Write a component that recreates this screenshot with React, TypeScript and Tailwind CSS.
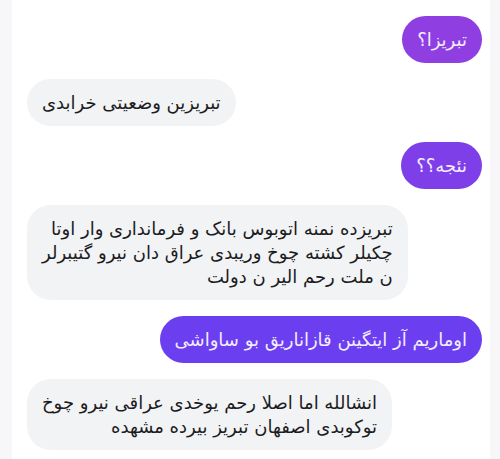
const messages = [
  { me: true, lines: ["تبریزا؟"], color: "bg-[#8f3ee2]" },
  { me: false, lines: ["تبریزین وضعیتی خرابدی"] },
  { me: true, lines: ["نئجه؟؟"], color: "bg-[#7e3fe8]" },
  {
    me: false,
    lines: [
      "تبریزده نمنه اتوبوس بانک و فرمانداری وار اوتا",
      "چکیلر کشته چوخ وریبدی عراق دان نیرو گتیبرلر",
      "ن ملت رحم الیر ن دولت",
    ],
  },
  { me: true, lines: ["اوماریم آز ایتگینن قازاناریق بو ساواشی"], color: "bg-[#6b3ff0]" },
  {
    me: false,
    lines: [
      "انشالله اما اصلا رحم یوخدی عراقی نیرو چوخ",
      "توکوبدی اصفهان تبریز بیرده مشهده",
    ],
  },
];

export default function App() {
  return (
    <div className="flex h-[459px] w-[500px] overflow-hidden bg-[#f7f7f9]">
      <div
        dir="rtl"
        className="ml-[12px] mr-[10px] flex flex-1 flex-col gap-4 overflow-hidden bg-white pl-[15px] pr-[8px]"
        style={{ fontFamily: '"DejaVu Sans", sans-serif' }}
      >
        {/* bottom edge of the previous message, scrolled off */}
        <div className="flex justify-end">
          <div className="-mt-[46px] h-[46px] w-[180px] rounded-full bg-[#f5f6f7]" />
        </div>
        {messages.map((m, i) => (
          <div key={i} className={`flex ${m.me ? "justify-start" : "justify-end"}`}>
            <div
              className={`px-[15px] py-[11.5px] text-[18px] leading-6 ${
                m.lines.length > 1 ? "rounded-[24px]" : "rounded-full"
              } ${m.me ? `${m.color} text-[#f4ecff]` : "bg-[#f2f3f5] text-[#1c1c1e]"}`}
            >
              {m.lines.map((l, j) => (
                <div key={j} className="whitespace-nowrap">
                  {l}
                </div>
              ))}
            </div>
          </div>
        ))}
      </div>
    </div>
  );
}
